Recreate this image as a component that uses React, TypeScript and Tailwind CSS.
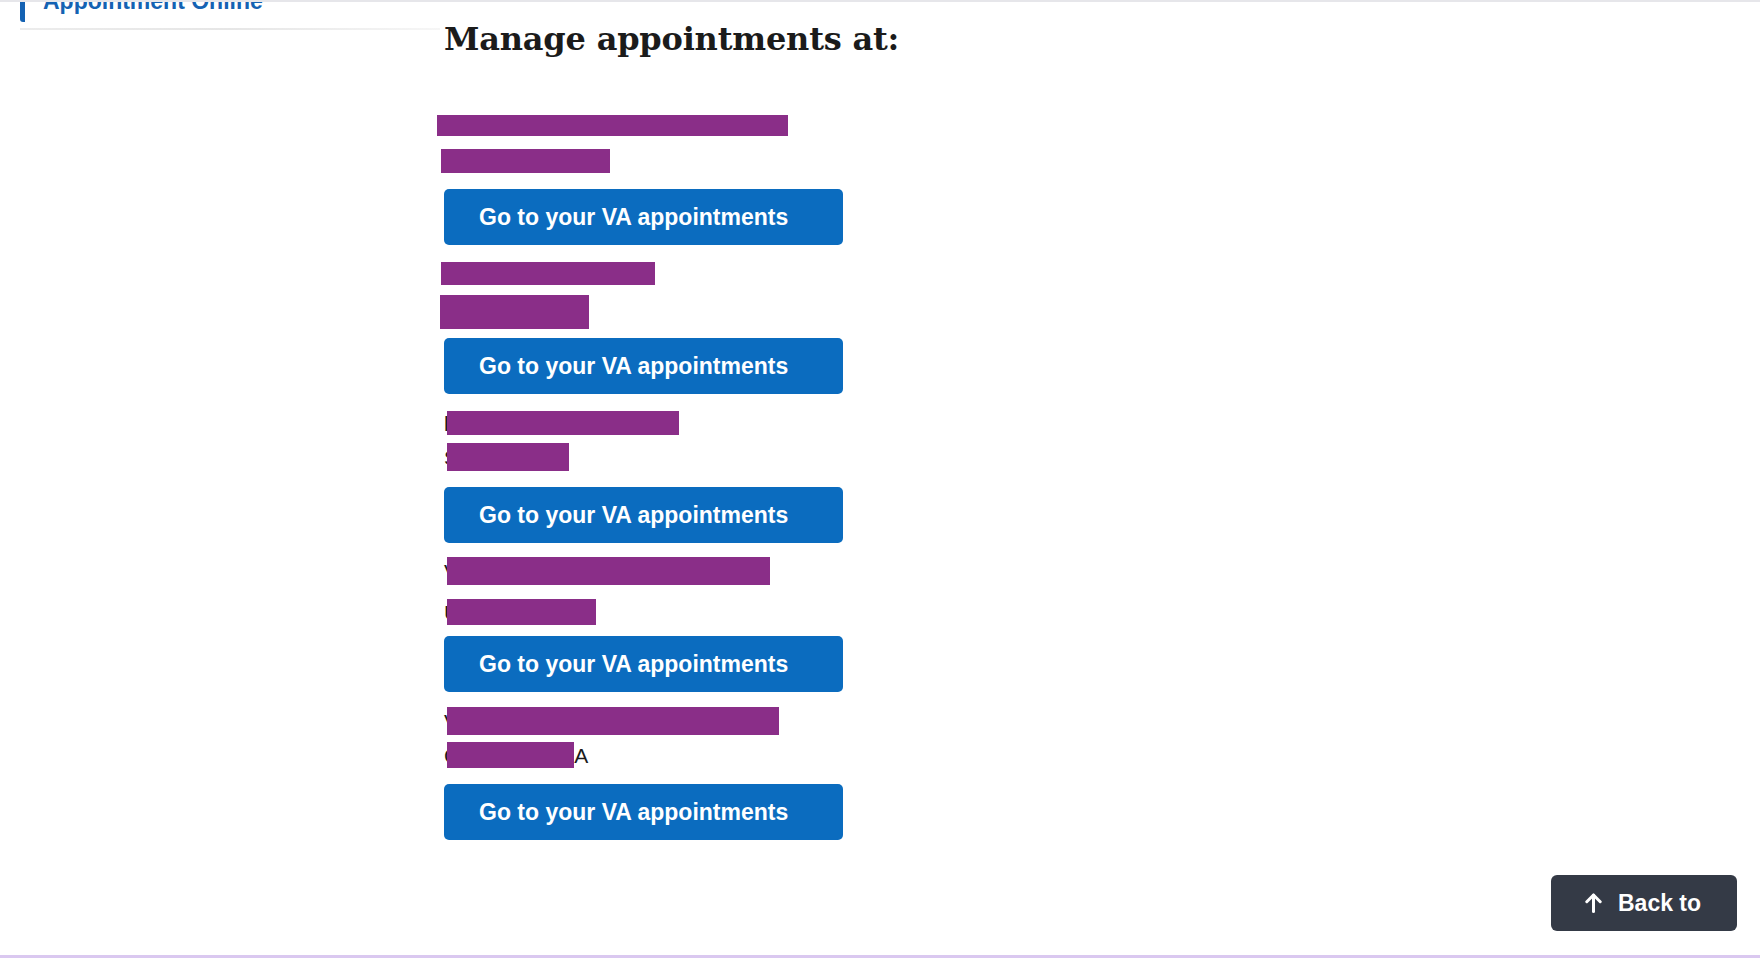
import React from "react";

type Line = {
  box: string;
  bar: string;
  text?: React.ReactNode;
};

const blocks: Line[][] = [
  [
    { box: "mt-[58px] h-[21px]", bar: "left-[-7px] w-[351px]" },
    { box: "mt-[13px] h-[24px]", bar: "left-[-3px] w-[169px]" },
  ],
  [
    { box: "mt-[17px] h-[23px]", bar: "left-[-3px] w-[214px]" },
    { box: "mt-[10px] h-[34px]", bar: "left-[-4px] w-[149px]" },
  ],
  [
    { box: "mt-[17px] h-[24px]", bar: "left-[3px] w-[232px]", text: "l" },
    { box: "mt-[8px] h-[28px]", bar: "left-[3px] w-[122px]", text: "S" },
  ],
  [
    { box: "mt-[14px] h-[28px]", bar: "left-[3px] w-[323px]", text: "V" },
    { box: "mt-[14px] h-[26px]", bar: "left-[3px] w-[149px]", text: "U" },
  ],
  [
    { box: "mt-[15px] h-[28px]", bar: "left-[3px] w-[332px]", text: "V" },
    {
      box: "mt-[7px] h-[26px]",
      bar: "left-[3px] w-[127px]",
      text: (
        <>
          <span>C</span>
          <span className="ml-[115px]">A</span>
        </>
      ),
    },
  ],
];

const buttonGaps = ["mt-[16px]", "mt-[9px]", "mt-[16px]", "mt-[11px]", "mt-[16px]"];

const RedactedLine: React.FC<{ line: Line }> = ({ line }) => (
  <div className={`relative flex items-center text-[21px] text-[#1b1b1b] ${line.box}`}>
    <span className="flex items-center leading-none">{line.text}</span>
    <div className={`absolute top-0 h-full bg-[#8a2e88] ${line.bar}`} />
  </div>
);

export default function App() {
  return (
    <div className="relative flex h-screen w-full overflow-hidden border-t-2 border-b-[3px] border-t-[#e6e6ea] border-b-[#dac8f0] bg-white font-['Liberation_Sans',Arial,sans-serif]">
      {/* side nav, scrolled mostly out of view */}
      <aside className="w-[444px] shrink-0">
        <div className="ml-[20px] mt-[-22px] flex h-[42px] items-center rounded-[3px] border-l-[5px] border-[#1462b3] pl-[18px]">
          <span className="text-[23px] font-bold leading-[42px] text-[#1462b3]">Appointment Online</span>
        </div>
        <div className="ml-[20px] mt-[6px] h-[2px] w-[420px] bg-gradient-to-r from-[#ececec] via-[#e6e6e6] to-[#f6f6f6]" />
      </aside>

      <main className="flex flex-col pt-[19px]">
        <h1 className="font-['DejaVu_Serif',Georgia,serif] text-[32px] font-bold leading-[36px] tracking-[-0.2px] text-[#1b1b1b]">
          Manage appointments at:
        </h1>

        {blocks.map((lines, i) => (
          <div key={i} className="flex flex-col">
            {lines.map((line, j) => (
              <RedactedLine key={j} line={line} />
            ))}
            <button
              className={`flex h-[56px] w-[399px] items-center rounded-[5px] bg-[#0b6cbf] pl-[35px] text-[23px] font-bold text-white ${buttonGaps[i]}`}
            >
              Go to your VA appointments
            </button>
          </div>
        ))}
      </main>

      <button className="absolute bottom-[24px] right-[23px] flex h-[56px] w-[186px] items-center gap-[16px] rounded-[6px] bg-[#343a46] pl-[34px] text-[23px] font-bold text-white">
        <svg width="17" height="20" viewBox="0 0 17 20" fill="none" stroke="currentColor" strokeWidth="3" strokeLinecap="round" strokeLinejoin="round">
          <path d="M8.5 18.5V2" />
          <path d="M1.8 8.7 8.5 2l6.7 6.7" />
        </svg>
        Back to
      </button>
    </div>
  );
}
